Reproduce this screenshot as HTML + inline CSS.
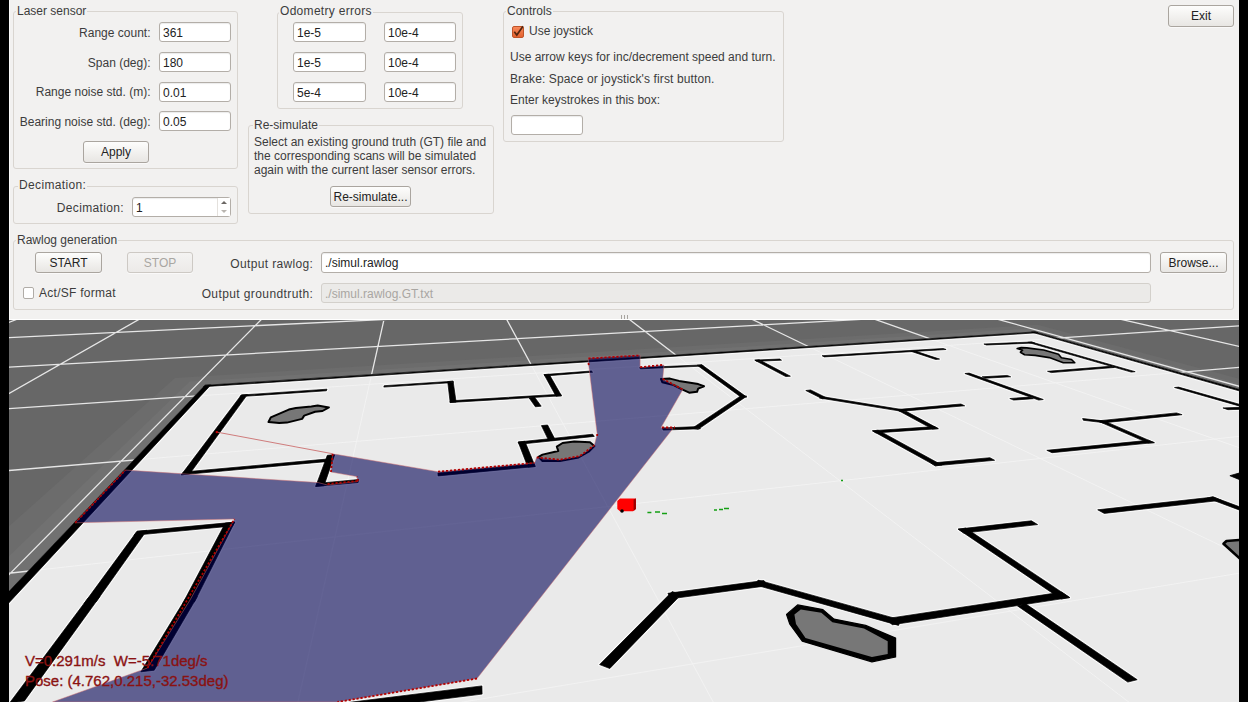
<!DOCTYPE html>
<html><head><meta charset="utf-8">
<style>
*{box-sizing:border-box;margin:0;padding:0}
html,body{width:1248px;height:702px;overflow:hidden;background:#f2f1f0}
body{position:relative;font-family:"Liberation Sans",sans-serif;font-size:12px;color:#3c3c3c}
.a{position:absolute}
.strip{position:absolute;top:0;width:9px;height:702px;background:#000}
.gb{position:absolute;border:1px solid #d9d5d0;border-radius:3px}
.gt{position:absolute;padding-top:1px;white-space:nowrap;background:#f2f1f0;padding:0 1px;line-height:14px;height:14px}
.lbl{position:absolute;padding-top:1px;white-space:nowrap;line-height:14px;text-align:right}
.txt{position:absolute;padding-top:1px;white-space:nowrap;line-height:14px}
.inp{position:absolute;background:#fff;border:1px solid #b3aea8;border-radius:3px;box-shadow:inset 0 1px 1px rgba(0,0,0,0.08);padding-left:3px;line-height:18px;padding-top:1px;white-space:nowrap;overflow:hidden;color:#222}
.btn{position:absolute;border:1px solid #aaa59f;border-radius:3px;background:linear-gradient(#fdfdfc,#e8e6e3);text-align:center;line-height:19px;padding-top:1px;white-space:nowrap;color:#222;box-shadow:0 1px 0 rgba(255,255,255,0.6)}
.dis{color:#a9a6a2;background:linear-gradient(#f4f3f2,#eceae8);border-color:#cdc9c4}
</style></head><body>
<div class="strip" style="left:0"></div>
<div class="strip" style="left:1239px"></div>
<div class="a" style="left:9px;top:0;width:1px;height:320px;background:#fbfbfa"></div>

<!-- Laser sensor -->
<div class="gb" style="left:13px;top:11px;width:225px;height:158px"></div>
<div class="gt" style="left:16px;top:4px">Laser sensor</div>
<div class="lbl" style="left:10px;width:140.5px;top:25px">Range count:</div>
<div class="inp" style="left:159px;top:22px;width:72px;height:20px">361</div>
<div class="lbl" style="left:10px;width:140.5px;top:55px">Span (deg):</div>
<div class="inp" style="left:159px;top:52px;width:72px;height:20px">180</div>
<div class="lbl" style="left:10px;width:140.5px;top:84px">Range noise std. (m):</div>
<div class="inp" style="left:159px;top:82px;width:72px;height:20px">0.01</div>
<div class="lbl" style="left:10px;width:140.5px;top:114px">Bearing noise std. (deg):</div>
<div class="inp" style="left:159px;top:111px;width:72px;height:20px">0.05</div>
<div class="btn" style="left:83px;top:141px;width:66px;height:22px">Apply</div>

<!-- Decimation -->
<div class="gb" style="left:13px;top:186px;width:225px;height:38px"></div>
<div class="gt" style="left:18px;top:178px;letter-spacing:0.35px">Decimation:</div>
<div class="lbl" style="left:10px;width:114px;top:200px;letter-spacing:0.35px">Decimation:</div>
<div class="inp" style="left:132px;top:197px;width:99px;height:20px">1</div>
<div class="a" style="left:217px;top:198px;width:13px;height:18px;border-left:1px solid #e4e1dd;background:#fff"></div>
<div class="a" style="left:221px;top:201px;width:0;height:0;border-left:3px solid transparent;border-right:3px solid transparent;border-bottom:3px solid #6b6763"></div>
<div class="a" style="left:221px;top:210px;width:0;height:0;border-left:3px solid transparent;border-right:3px solid transparent;border-top:3px solid #b9b5b0"></div>

<!-- Odometry errors -->
<div class="gb" style="left:277px;top:12px;width:186px;height:97px"></div>
<div class="gt" style="left:279px;top:4px;letter-spacing:0.3px">Odometry errors</div>
<div class="inp" style="left:293px;top:22px;width:73px;height:20px">1e-5</div>
<div class="inp" style="left:384px;top:22px;width:72px;height:20px">10e-4</div>
<div class="inp" style="left:293px;top:52px;width:73px;height:20px">1e-5</div>
<div class="inp" style="left:384px;top:52px;width:72px;height:20px">10e-4</div>
<div class="inp" style="left:293px;top:82px;width:73px;height:20px">5e-4</div>
<div class="inp" style="left:384px;top:82px;width:72px;height:20px">10e-4</div>

<!-- Re-simulate -->
<div class="gb" style="left:248px;top:125px;width:246px;height:89px"></div>
<div class="gt" style="left:253px;top:118px">Re-simulate</div>
<div class="txt" style="left:254px;top:135px;line-height:13.9px">Select an existing ground truth (GT) file and<br>the corresponding scans will be simulated<br>again with the current laser sensor errors.</div>
<div class="btn" style="left:330px;top:186px;width:81px;height:21px">Re-simulate...</div>

<!-- Controls -->
<div class="gb" style="left:503px;top:11px;width:281px;height:131px"></div>
<div class="gt" style="left:506px;top:4px">Controls</div>
<div class="a" style="left:512px;top:25.5px;width:12px;height:12px;border:1px solid #c05428;border-radius:2px;background:linear-gradient(#f7885a,#e4622f)"></div>
<svg class="a" style="left:512px;top:25px;overflow:visible" width="12" height="12"><path d="M2.3,6.8 L4.8,10 L11,1.2" stroke="#55260f" stroke-width="1.7" fill="none"/></svg>
<div class="txt" style="left:529px;top:23px">Use joystick</div>
<div class="txt" style="left:510px;top:49px">Use arrow keys for inc/decrement speed and turn.</div>
<div class="txt" style="left:510px;top:71px;letter-spacing:0.12px">Brake: Space or joystick's first button.</div>
<div class="txt" style="left:510px;top:92px">Enter keystrokes in this box:</div>
<div class="inp" style="left:511px;top:115px;width:72px;height:20px"></div>

<!-- Exit -->
<div class="btn" style="left:1168px;top:5px;width:66px;height:22px">Exit</div>

<!-- Rawlog generation -->
<div class="gb" style="left:13px;top:240px;width:1221px;height:70px"></div>
<div class="gt" style="left:16px;top:233px">Rawlog generation</div>
<div class="btn" style="left:35px;top:252px;width:67px;height:21px">START</div>
<div class="btn dis" style="left:127px;top:252px;width:66px;height:21px">STOP</div>
<div class="lbl" style="left:150px;width:163.3px;top:256px;letter-spacing:0.35px">Output rawlog:</div>
<div class="inp" style="left:321px;top:252px;width:830px;height:21px;line-height:19px">./simul.rawlog</div>
<div class="btn" style="left:1160px;top:252px;width:67px;height:21px">Browse...</div>
<div class="a" style="left:22.5px;top:287px;width:11.5px;height:11.5px;border:1px solid #b0aca7;border-radius:2px;background:#fff"></div>
<div class="txt" style="left:39px;top:285px;letter-spacing:0.27px">Act/SF format</div>
<div class="lbl" style="left:150px;width:163.3px;top:286px;letter-spacing:0.4px">Output groundtruth:</div>
<div class="inp" style="left:321px;top:283px;width:830px;height:20px;background:#ebeae8;border-color:#d3d0cb;color:#a9a6a2;box-shadow:none">./simul.rawlog.GT.txt</div>

<!-- splitter -->
<div class="a" style="left:621px;top:315px;width:1px;height:4px;background:#a8a5a0"></div>
<div class="a" style="left:624px;top:315px;width:1px;height:4px;background:#a8a5a0"></div>
<div class="a" style="left:627px;top:315px;width:1px;height:4px;background:#a8a5a0"></div>
<div class="a" style="left:9px;top:319px;width:1230px;height:1px;background:#fff"></div>

<svg class="a" style="left:0;top:0" width="1248" height="702" viewBox="0 0 1248 702">
<g clip-path="url(#view)">
<defs><clipPath id="mapclip"><path d="M204.9,385.3 L1035.0,331.9 L1992.5,601.0 L-631.8,1265.3Z"/></clipPath><clipPath id="view"><rect x="9" y="320" width="1230" height="382"/></clipPath></defs>
<rect x="9" y="320" width="1230" height="382" fill="#676767"/>
<path d="M175.0,378.0 L1037.6,324.7 L2030.8,591.3 L-891.2,1330.9Z" fill="#6c6c6c"/>
<path d="M189.7,381.6 L1036.3,328.2 L2011.9,596.1 L-757.8,1297.2Z" fill="#717171"/>
<path d="  M27.6,315.0 L4.0,324.4 M146.7,315.0 L4.0,396.4 M265.8,315.0 L4.0,579.7 M385.0,315.0 L296.8,707.0 M504.3,315.0 L715.9,707.0 M623.6,315.0 L1135.2,707.0 M743.1,315.0 L1244.0,556.9 M862.6,315.0 L1244.0,449.4 M982.2,315.0 L1244.0,387.6 M1101.9,315.0 L1244.0,347.5 M1221.7,315.0 L1244.0,319.3     M4.0,315.6 L17.9,315.0 M4.0,337.8 L477.7,315.0 M4.0,367.5 L938.7,315.0 M4.0,408.9 L1244.0,325.6 M4.0,470.9 L1244.0,367.0 M4.0,573.8 L1244.0,435.8 M432.9,707.0 L1244.0,572.4   " stroke="#e6e6e6" stroke-width="1.3" fill="none"/>
<path d="M204.9,385.3 L1035.0,331.9 L1992.5,601.0 L-631.8,1265.3Z" fill="#eaeaea"/>
<g clip-path="url(#mapclip)"><path d="  M27.6,315.0 L4.0,324.4 M146.7,315.0 L4.0,396.4 M265.8,315.0 L4.0,579.7 M385.0,315.0 L296.8,707.0 M504.3,315.0 L715.9,707.0 M623.6,315.0 L1135.2,707.0 M743.1,315.0 L1244.0,556.9 M862.6,315.0 L1244.0,449.4 M982.2,315.0 L1244.0,387.6 M1101.9,315.0 L1244.0,347.5 M1221.7,315.0 L1244.0,319.3     M4.0,315.6 L17.9,315.0 M4.0,337.8 L477.7,315.0 M4.0,367.5 L938.7,315.0 M4.0,408.9 L1244.0,325.6 M4.0,470.9 L1244.0,367.0 M4.0,573.8 L1244.0,435.8 M432.9,707.0 L1244.0,572.4   " stroke="#f3f3f3" stroke-width="0.9" fill="none"/></g>
<path d="M-596.5,1256.3 L210.8,384.9 L204.9,385.3 L-631.8,1265.3Z M203.5,386.7 L1038.0,332.7 L1035.0,331.9 L204.9,385.3Z M1031.5,332.1 L1986.7,602.4 L1992.5,601.0 L1035.0,331.9Z M327.0,389.2 L241.3,395.0 L240.1,396.6 L326.4,390.8Z M241.3,395.0 L181.3,474.8 L189.6,474.0 L247.4,394.6Z M181.3,474.8 L325.6,461.7 L326.4,459.1 L183.4,472.0Z M327.3,455.3 L315.7,486.4 L324.0,485.7 L334.7,454.7Z M315.8,486.4 L358.1,482.5 L358.7,479.5 L316.8,483.4Z M24.4,700.9 L99.9,596.5 L88.1,598.0 L9.5,703.1Z M96.0,602.0 L146.9,530.3 L137.0,531.3 L84.0,603.6Z M133.9,535.3 L232.6,526.0 L234.8,522.1 L137.2,531.3Z M225.3,523.1 L182.7,603.5 L194.4,602.1 L234.7,522.1Z M186.0,597.8 L140.8,671.8 L154.2,670.2 L197.3,596.6Z M383.8,387.1 L453.3,382.6 L453.1,381.2 L384.2,385.7Z M447.7,381.6 L450.2,402.6 L456.1,402.1 L453.1,381.2Z M450.0,402.5 L561.4,395.8 L560.7,394.2 L450.1,400.8Z M561.5,395.8 L549.2,374.3 L544.1,374.6 L556.0,396.2Z M544.9,376.0 L592.6,372.2 L591.4,371.0 L544.0,374.6Z M529.2,398.0 L535.4,406.8 L541.2,406.2 L534.8,397.4Z M541.4,425.6 L548.7,440.6 L555.3,440.0 L547.6,425.0Z M592.7,434.2 L518.1,442.0 L519.2,444.3 L594.3,436.4Z M518.2,442.0 L527.9,467.2 L535.2,466.5 L524.9,441.3Z M534.1,463.8 L437.9,473.1 L438.1,475.9 L535.1,466.5Z M640.4,368.8 L703.3,366.1 L702.1,364.9 L639.6,367.6Z M697.2,365.2 L741.5,397.5 L746.7,397.1 L701.8,364.8Z M741.4,395.4 L692.3,428.2 L698.1,429.3 L746.7,396.2Z M699.1,426.6 L662.2,427.9 L663.2,430.1 L700.4,428.8Z M790.4,376.2 L759.1,359.8 L754.8,360.2 L785.8,376.6Z M756.5,361.3 L781.5,360.2 L779.8,359.0 L754.9,360.1Z M824.3,356.9 L946.1,349.5 L943.3,348.5 L822.1,355.7Z M910.7,351.2 L935.8,359.5 L939.6,359.1 L914.5,350.8Z M805.8,390.5 L822.3,398.8 L827.2,398.2 L810.6,389.9Z M819.5,398.0 L903.4,411.6 L904.8,410.0 L821.4,396.5Z M900.1,411.4 L964.7,405.8 L960.9,404.0 L896.6,409.6Z M898.3,410.5 L932.6,429.1 L938.3,428.6 L903.7,410.1Z M934.6,426.6 L872.6,430.7 L875.8,432.9 L938.2,428.7Z M872.5,430.9 L935.6,465.8 L941.8,465.0 L878.1,430.2Z M935.2,465.8 L994.6,460.3 L989.9,457.7 L930.9,463.1Z M986.5,345.0 L1034.7,343.0 L1031.8,342.0 L983.9,344.0Z M1027.9,342.3 L1131.2,372.1 L1135.2,371.7 L1031.4,342.0Z M1051.3,372.6 L1114.4,367.5 L1110.2,366.3 L1047.5,371.3Z M964.9,373.5 L1038.7,400.1 L1043.3,399.5 L969.1,373.1Z M985.4,378.2 L1010.7,376.8 L1007.3,375.4 L982.2,376.8Z M1013.6,400.1 L1033.3,398.7 L1029.3,397.1 L1009.8,398.5Z M1083.4,420.3 L1106.6,423.0 L1105.6,421.1 L1082.6,418.5Z M1102.5,422.9 L1182.1,414.7 L1176.5,412.9 L1097.4,420.9Z M1099.7,421.8 L1148.3,443.1 L1154.3,442.7 L1105.3,421.4Z M1148.5,440.3 L1046.8,450.3 L1052.0,452.7 L1154.3,442.6Z M1174.5,387.5 L1257.9,411.3 L1262.1,410.7 L1178.5,387.1Z M1227.9,409.7 L1252.6,408.9 L1247.4,407.1 L1222.9,407.9Z M1104.3,513.4 L1221.3,500.3 L1213.7,497.0 L1097.7,509.8Z M1207.3,498.1 L1257.3,516.7 L1262.6,515.3 L1212.6,496.8Z M609.8,668.5 L681.3,594.4 L672.1,591.6 L599.6,664.6Z M670.8,598.8 L767.9,585.7 L763.9,580.5 L667.9,593.3Z M754.6,584.7 L898.5,625.4 L900.8,619.9 L758.2,580.1Z M892.2,624.8 L1069.7,597.6 L1061.7,592.1 L886.1,618.7Z M1069.7,597.5 L965.7,528.1 L958.2,529.2 L1061.1,599.0Z M963.8,533.1 L1037.6,524.6 L1031.4,520.8 L958.3,529.1Z M1017.5,605.9 L1127.8,682.1 L1137.2,679.7 L1026.0,604.1Z M298.6,717.2 L482.1,694.1 L481.9,685.9 L301.4,708.3Z" fill="#fafafa" stroke="#fafafa" stroke-width="3" stroke-linejoin="round" clip-path="url(#mapclip)"/>
<path d="M-596.5,1256.3 L210.8,384.9 L204.9,385.3 L-631.8,1265.3Z M203.5,386.7 L1038.0,332.7 L1035.0,331.9 L204.9,385.3Z M1031.5,332.1 L1986.7,602.4 L1992.5,601.0 L1035.0,331.9Z M327.0,389.2 L241.3,395.0 L240.1,396.6 L326.4,390.8Z M241.3,395.0 L181.3,474.8 L189.6,474.0 L247.4,394.6Z M181.3,474.8 L325.6,461.7 L326.4,459.1 L183.4,472.0Z M327.3,455.3 L315.7,486.4 L324.0,485.7 L334.7,454.7Z M315.8,486.4 L358.1,482.5 L358.7,479.5 L316.8,483.4Z M24.4,700.9 L99.9,596.5 L88.1,598.0 L9.5,703.1Z M96.0,602.0 L146.9,530.3 L137.0,531.3 L84.0,603.6Z M133.9,535.3 L232.6,526.0 L234.8,522.1 L137.2,531.3Z M225.3,523.1 L182.7,603.5 L194.4,602.1 L234.7,522.1Z M186.0,597.8 L140.8,671.8 L154.2,670.2 L197.3,596.6Z M383.8,387.1 L453.3,382.6 L453.1,381.2 L384.2,385.7Z M447.7,381.6 L450.2,402.6 L456.1,402.1 L453.1,381.2Z M450.0,402.5 L561.4,395.8 L560.7,394.2 L450.1,400.8Z M561.5,395.8 L549.2,374.3 L544.1,374.6 L556.0,396.2Z M544.9,376.0 L592.6,372.2 L591.4,371.0 L544.0,374.6Z M529.2,398.0 L535.4,406.8 L541.2,406.2 L534.8,397.4Z M541.4,425.6 L548.7,440.6 L555.3,440.0 L547.6,425.0Z M592.7,434.2 L518.1,442.0 L519.2,444.3 L594.3,436.4Z M518.2,442.0 L527.9,467.2 L535.2,466.5 L524.9,441.3Z M534.1,463.8 L437.9,473.1 L438.1,475.9 L535.1,466.5Z M640.4,368.8 L703.3,366.1 L702.1,364.9 L639.6,367.6Z M697.2,365.2 L741.5,397.5 L746.7,397.1 L701.8,364.8Z M741.4,395.4 L692.3,428.2 L698.1,429.3 L746.7,396.2Z M699.1,426.6 L662.2,427.9 L663.2,430.1 L700.4,428.8Z M790.4,376.2 L759.1,359.8 L754.8,360.2 L785.8,376.6Z M756.5,361.3 L781.5,360.2 L779.8,359.0 L754.9,360.1Z M824.3,356.9 L946.1,349.5 L943.3,348.5 L822.1,355.7Z M910.7,351.2 L935.8,359.5 L939.6,359.1 L914.5,350.8Z M805.8,390.5 L822.3,398.8 L827.2,398.2 L810.6,389.9Z M819.5,398.0 L903.4,411.6 L904.8,410.0 L821.4,396.5Z M900.1,411.4 L964.7,405.8 L960.9,404.0 L896.6,409.6Z M898.3,410.5 L932.6,429.1 L938.3,428.6 L903.7,410.1Z M934.6,426.6 L872.6,430.7 L875.8,432.9 L938.2,428.7Z M872.5,430.9 L935.6,465.8 L941.8,465.0 L878.1,430.2Z M935.2,465.8 L994.6,460.3 L989.9,457.7 L930.9,463.1Z M986.5,345.0 L1034.7,343.0 L1031.8,342.0 L983.9,344.0Z M1027.9,342.3 L1131.2,372.1 L1135.2,371.7 L1031.4,342.0Z M1051.3,372.6 L1114.4,367.5 L1110.2,366.3 L1047.5,371.3Z M964.9,373.5 L1038.7,400.1 L1043.3,399.5 L969.1,373.1Z M985.4,378.2 L1010.7,376.8 L1007.3,375.4 L982.2,376.8Z M1013.6,400.1 L1033.3,398.7 L1029.3,397.1 L1009.8,398.5Z M1083.4,420.3 L1106.6,423.0 L1105.6,421.1 L1082.6,418.5Z M1102.5,422.9 L1182.1,414.7 L1176.5,412.9 L1097.4,420.9Z M1099.7,421.8 L1148.3,443.1 L1154.3,442.7 L1105.3,421.4Z M1148.5,440.3 L1046.8,450.3 L1052.0,452.7 L1154.3,442.6Z M1174.5,387.5 L1257.9,411.3 L1262.1,410.7 L1178.5,387.1Z M1227.9,409.7 L1252.6,408.9 L1247.4,407.1 L1222.9,407.9Z M1104.3,513.4 L1221.3,500.3 L1213.7,497.0 L1097.7,509.8Z M1207.3,498.1 L1257.3,516.7 L1262.6,515.3 L1212.6,496.8Z M609.8,668.5 L681.3,594.4 L672.1,591.6 L599.6,664.6Z M670.8,598.8 L767.9,585.7 L763.9,580.5 L667.9,593.3Z M754.6,584.7 L898.5,625.4 L900.8,619.9 L758.2,580.1Z M892.2,624.8 L1069.7,597.6 L1061.7,592.1 L886.1,618.7Z M1069.7,597.5 L965.7,528.1 L958.2,529.2 L1061.1,599.0Z M963.8,533.1 L1037.6,524.6 L1031.4,520.8 L958.3,529.1Z M1017.5,605.9 L1127.8,682.1 L1137.2,679.7 L1026.0,604.1Z M298.6,717.2 L482.1,694.1 L481.9,685.9 L301.4,708.3Z" fill="#000" stroke="#000" stroke-width="0.7"/>
<path d="M268.5,422.0 L270.8,417.4 L288.8,409.6 L295.9,408.0 L311.3,406.5 L317.7,405.6 L328.9,407.4 L322.5,411.0 L315.1,411.7 L304.2,415.6 L302.1,418.9 L286.9,422.6 L279.2,422.9Z" fill="#777" stroke="#000" stroke-width="2" stroke-linejoin="round"/>
<path d="M538.5,456.8 L542.5,454.6 L558.3,451.0 L556.8,446.7 L562.6,443.0 L574.2,441.6 L590.0,442.3 L594.4,446.0 L588.6,451.7 L578.5,457.5 L559.8,461.1 L542.5,461.1Z" fill="#777" stroke="#000" stroke-width="2" stroke-linejoin="round"/>
<path d="M661.0,379.0 L670.0,378.6 L679.0,380.9 L698.2,384.1 L704.0,386.3 L698.2,388.6 L697.0,391.8 L689.2,392.7 L681.5,389.2 L672.6,384.7 L662.3,382.2Z" fill="#777" stroke="#000" stroke-width="2" stroke-linejoin="round"/>
<path d="M1017.2,348.6 L1021.2,347.6 L1026.8,347.9 L1032.4,348.6 L1043.7,350.0 L1058.5,354.2 L1061.4,357.7 L1071.5,359.5 L1074.8,362.8 L1063.3,362.8 L1049.3,357.6 L1035.2,355.4 L1024.6,354.8 L1020.4,352.2 L1022.6,350.2Z" fill="#777" stroke="#000" stroke-width="1.6" stroke-linejoin="round"/>
<path d="M1223.5,543.8 L1226.5,541.0 L1245.0,539.5 L1245.0,563.0Z" fill="#777" stroke="#000" stroke-width="2.6" stroke-linejoin="round"/>
<path d="M786.5,614.4 L797.6,604.9 L822.9,609.6 L834.0,619.1 L865.6,625.4 L895.6,638.1 L895.6,657.0 L871.9,661.8 L802.3,641.2 L789.7,623.9Z" fill="#000" stroke="#000" stroke-width="1.2" stroke-linejoin="round"/>
<path d="M794.4,614.4 L800.8,609.6 L821.3,612.8 L832.4,622.3 L864.0,628.6 L887.7,641.2 L887.7,653.9 L871.9,657.0 L805.5,638.1 L796.0,623.9Z" fill="#777"/>
<path d="M1229.9,475.7 L1240,472.8 L1240,479.8Z" fill="#000" stroke="#000" stroke-width="0.8"/>
<path d="M588.4,358.0 L640.1,355.1 L640.1,367.6 L664.0,365.1 L662.7,378.9 L672.0,384.0 L682.8,389.5 L661.0,427.5 L673.0,428.5 L671.0,431.0 L477.0,678.5 L337.4,702.0 L52.5,702.0 L147.5,668.0 L190.0,600.0 L234.5,519.0 L75.2,522.8 L125.4,470.1 L318.3,482.6 L327.5,485.0 L358.0,481.4 L356.7,476.6 L331.0,472.0 L332.7,453.8 L438.0,471.7 L534.5,462.9 L536.7,457.5 L559.8,459.7 L580.0,456.0 L594.4,445.2 L597.2,434.1 L588.4,362.6Z" fill="rgb(0,0,84)" fill-opacity="0.59" stroke="#d87070" stroke-opacity="0.6" stroke-width="0.8"/>
<path d="M216.8,432.1 L332.7,453.75" stroke="#c86060" stroke-width="0.8" fill="none"/>
<circle cx="216.8" cy="432.1" r="1.2" fill="#c00"/>
<path d="M588.4,358.5 L640.1,355.5 M640.1,367.2 L664.0,364.8 M662.7,378.9 L682.8,389.5 M662.0,427.5 L675.0,427.5 M477.0,678.5 L337.4,702.0 M147.5,668.0 L234.5,519.0 M75.2,522.8 L125.4,470.1 M327.5,484.0 L358.0,481.0 M358.0,481.0 L357.0,476.6 M331.0,472.0 L332.7,453.8 M438.0,471.7 L534.5,462.9 M536.7,457.5 L559.8,459.7 L580.0,456.0 L594.4,445.2 M597.2,434.1 L597.2,436.0 M588.4,363.0 L589.0,366.0" stroke="#b00000" stroke-width="1.8" stroke-dasharray="2.2 1.8" fill="none"/>
<path d="M617.3,501 L620,498.4 L635.9,498.4 L635.9,509 L633,511.3 L620,511.3 L617.3,509Z" fill="#f00"/>
<path d="M633.6,499.5 L635.9,498.4 L635.9,509 L633.6,511Z" fill="#9a0000"/>
<circle cx="622" cy="511" r="1.8" fill="#000"/>
<path d="M647.4,512.5 h4 M655,512 h5 M662,513.5 h5 M714,510 h3 M719,509.5 h4 M724,508.5 h5 M841,480.5 h2" stroke="#14a014" stroke-width="1.5" fill="none"/>
</g>
<g font-family="Liberation Sans" font-size="15" fill="#8a1212" stroke="#8a1212" stroke-width="0.35">
<text x="25" y="666">V=0.291m/s&#160; W=-5.71deg/s</text>
<text x="25" y="686">Pose: (4.762,0.215,-32.53deg)</text>
</g>
</svg>
</body></html>
